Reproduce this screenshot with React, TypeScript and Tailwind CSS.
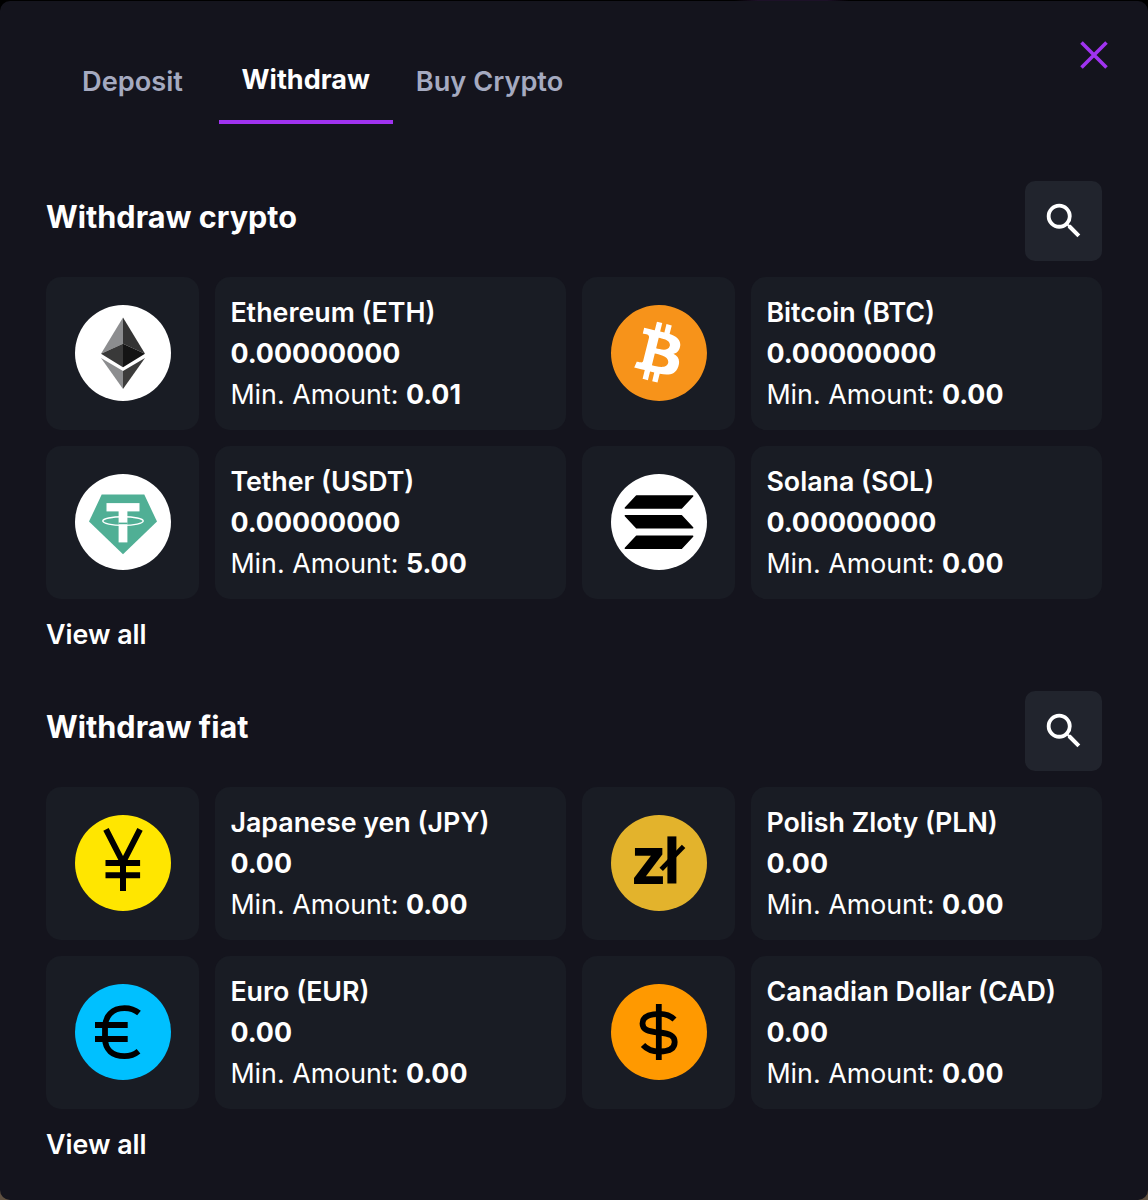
import React from 'react'
import { MdSearch } from 'react-icons/md'
import { SiBitcoin } from 'react-icons/si'

type Currency = {
  name: string
  balance: string
  min: string
  icon: React.ReactNode
}

const EthIcon = () => (
  <svg viewBox="0 0 96 96" className="h-24 w-24">
    <circle cx="48" cy="48" r="48" fill="#fff" />
    <path d="M48 12.5 26 48.7 48 38.7Z" fill="#8c8d8f" />
    <path d="M48 12.5 70 48.7 48 38.7Z" fill="#343434" />
    <path d="M26 48.7 48 38.7V62.200Z" fill="#393939" />
    <path d="M70 48.7 48 38.7V62.200Z" fill="#141414" />
    <path d="M26 53 48 66V84Z" fill="#8c8d8f" />
    <path d="M70 53 48 66V84Z" fill="#3c3c3b" />
  </svg>
)

const BtcIcon = () => (
  <div className="flex h-24 w-24 rounded-full bg-[radial-gradient(circle,#fff_60%,transparent_61%)]">
    <SiBitcoin className="h-24 w-24 text-[#f7931a]" />
  </div>
)

const UsdtIcon = () => (
  <svg viewBox="0 0 96 96" className="h-24 w-24">
    <circle cx="48" cy="48" r="48" fill="#fff" />
    <path d="M26.7 20.6H69.3L82 47.6 48 80.300 14 47.6Z" fill="#50af95" />
    <rect x="31.5" y="29.1" width="33" height="8.3" fill="#fff" />
    <rect x="43.6" y="34" width="8.8" height="34.4" fill="#fff" />
    <ellipse cx="48" cy="47.1" rx="20.2" ry="4.3" fill="none" stroke="#fff" strokeWidth="1.4" />
    <path d="M43.4 49.4h9.2" stroke="#50af95" strokeWidth="1.6" />
  </svg>
)

const SolIcon = () => (
  <svg viewBox="0 0 96 96" className="h-24 w-24">
    <circle cx="48" cy="48" r="48" fill="#fff" />
    <g fill="#000" stroke="#000" strokeWidth="1.4" strokeLinejoin="round">
      <path d="M25.500 22H81.700L70.500 34H14.300Z" />
      <path d="M14.300 41.800H70.500L81.700 53.800H25.500Z" />
      <path d="M25.500 62.200H81.700L70.500 74.200H14.300Z" />
    </g>
  </svg>
)

const YenIcon = () => (
  <svg viewBox="0 0 96 96" className="h-24 w-24">
    <circle cx="48" cy="48" r="48" fill="#ffe600" />
    <g fill="none" stroke="#000" strokeWidth="6">
      <path d="M31 14.3 48 47.5 65 14.3" />
      <path d="M48 45V76M30.5 48h34.6M30.5 60.3h34.6" />
    </g>
  </svg>
)

const ZlotyIcon = () => (
  <svg viewBox="0 0 96 96" className="h-24 w-24 overflow-visible">
    <circle cx="48" cy="48" r="48" fill="#e3b32c" />
    <text x="21" y="68.5" fontSize="67" fontWeight="700" fontFamily="'Noto Sans', sans-serif">z</text>
    <path d="M60.9 21.4v47.1" stroke="#000" strokeWidth="9" />
    <path d="M50.2 54.400 72.6 31.300" stroke="#000" strokeWidth="4.8" />
  </svg>
)

const EuroIcon = () => (
  <svg viewBox="0 0 96 96" className="h-24 w-24">
    <circle cx="48" cy="48" r="48" fill="#00c0ff" />
    <g fill="none" stroke="#000" strokeWidth="5.8">
      <path d="M64 29.100C59.5 25.400 55 24.200 49.5 24.200 37.5 24.200 30 31.800 30 43.800v10c0 12 7.500 18.400 19.500 18.400 5.500 0 10-1.600 14-5" />
      <path d="M20 41h32.700M20 55h32.700" />
    </g>
  </svg>
)

const DollarIcon = () => (
  <svg viewBox="0 0 96 96" className="h-24 w-24">
    <circle cx="48" cy="48" r="48" fill="#ff9900" />
    <g fill="none" stroke="#000" strokeWidth="5.8">
      <path d="M47.800 20v56" />
      <path d="M63.500 35.500C59.500 31.700 54.500 29.800 49 29.800 37.500 29.800 31.500 32.700 31.500 39.500c0 6 5 8 16.500 9C59.500 49.500 63.700 52 63.700 58c0 7-6 9.500-15.200 9.500-6.500 0-12.500-2-16.500-6.500" />
    </g>
  </svg>
)

const CRYPTO: Currency[] = [
  { name: 'Ethereum (ETH)', balance: '0.00000000', min: '0.01', icon: <EthIcon /> },
  { name: 'Bitcoin (BTC)', balance: '0.00000000', min: '0.00', icon: <BtcIcon /> },
  { name: 'Tether (USDT)', balance: '0.00000000', min: '5.00', icon: <UsdtIcon /> },
  { name: 'Solana (SOL)', balance: '0.00000000', min: '0.00', icon: <SolIcon /> },
]

const FIAT: Currency[] = [
  { name: 'Japanese yen (JPY)', balance: '0.00', min: '0.00', icon: <YenIcon /> },
  { name: 'Polish Zloty (PLN)', balance: '0.00', min: '0.00', icon: <ZlotyIcon /> },
  { name: 'Euro (EUR)', balance: '0.00', min: '0.00', icon: <EuroIcon /> },
  { name: 'Canadian Dollar (CAD)', balance: '0.00', min: '0.00', icon: <DollarIcon /> },
]

const Section = ({ title, items }: { title: string; items: Currency[] }) => {
  return (
    <section className="h-[510px]">
      <div className="flex h-[96px] items-start justify-between">
        <h2 className="mt-[14px] text-[30.6px] leading-[44px] font-bold">{title}</h2>
        <button className="-mt-[0.5px] flex h-[80.5px] w-[77px] items-center justify-center rounded-[10px] bg-[#21242d]">
          <MdSearch className="h-[46px] w-[46px]" />
        </button>
      </div>

      <div className="grid grid-cols-[153px_351px_153px_351px] gap-4">
        {items.map((item) => (
          <React.Fragment key={item.name}>
            <div className="flex h-[153px] items-center justify-center rounded-[15px] bg-[#191c24] pb-px">
              {item.icon}
            </div>
            <div className="flex h-[153px] flex-col justify-center rounded-[15px] bg-[#191c24] pl-[15.4px] text-[26.8px] leading-[41.3px] whitespace-nowrap">
              <p className="font-semibold">{item.name}</p>
              <p className="font-bold">{item.balance}</p>
              <p>
                Min. Amount: <span className="font-bold">{item.min}</span>
              </p>
            </div>
          </React.Fragment>
        ))}
      </div>

      <a href="#" className="mt-[15px] block w-fit text-[26.8px] leading-[41px] font-semibold">View all</a>
    </section>
  )
}

const App = () => {
  return (
    <div className="h-[1200px] w-[1148px] bg-[linear-gradient(90deg,#000_64%,#1d1128_66%,#1d1128_72%,#000_74%)] font-['Inter',sans-serif] text-white">
      <div className="h-px" />
      <div className="bg-[linear-gradient(#000_50%,#5f5040_50%)]">
        <div className="h-[1199px] rounded-[10px] bg-[#14141d] pr-[46px] pl-[46px]">
          <header className="flex h-[180px] items-start justify-between">
            <nav className="flex pt-[50px] text-[27.2px] font-semibold text-[#a5aac0]">
              <button className="h-[62px] w-[173px] text-center">Deposit</button>
              <button className="h-[73px] w-[173.5px] border-b-4 border-[#a033f0] pb-[10px] text-center text-[27px] font-bold text-white">Withdraw</button>
              <button className="h-[62px] w-[194px] text-center">Buy Crypto</button>
            </nav>
            <button aria-label="Close" className="mt-[38px] -mr-[8px]">
              <svg viewBox="0 0 32 32" className="h-8 w-8" fill="none" stroke="#a033f0" strokeWidth="3.6">
                <path d="M3.500 3.500 28.500 28.500M28.500 3.500 3.500 28.500" />
              </svg>
            </button>
          </header>
          <Section title="Withdraw crypto" items={CRYPTO} />
          <Section title="Withdraw fiat" items={FIAT} />
        </div>
      </div>
    </div>
  )
}

export default App
